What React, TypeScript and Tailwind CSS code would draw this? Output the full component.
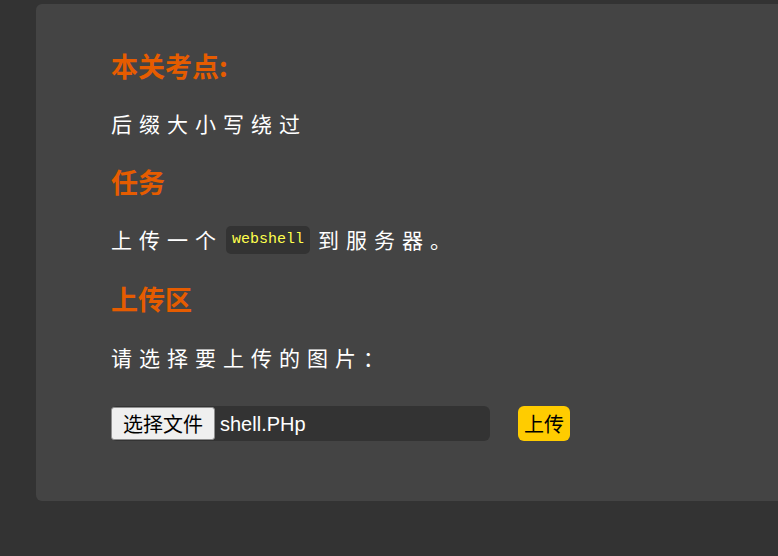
export default function App() {
  const cjk = { fontFamily: '"Noto Sans CJK SC", "Noto Sans", sans-serif' };

  return (
    <div className="w-[778px] h-[556px] overflow-hidden bg-[#333333] pt-[4px] pl-[36px]">
      {/* main card */}
      <div
        className="w-[800px] rounded-[6px] bg-[#444444] pl-[75px] pt-[46px] pb-[60px] flex flex-col"
        style={cjk}
      >
        <h2 className="h-[32px] leading-[32px] text-[27px] font-bold text-[#e65c00]">本关考点:</h2>
        <p className="mt-[25px] h-[32px] leading-[32px] text-[21px] tracking-[7px] text-white">
          后缀大小写绕过
        </p>

        <h2 className="mt-[27px] h-[32px] leading-[32px] text-[27px] font-bold text-[#e65c00]">任务</h2>
        <p className="mt-[26px] h-[32px] flex items-center text-[21px] tracking-[7px] text-white">
          <span>上传一个</span>
          <code
            className="ml-[3px] mr-[8px] h-[28px] px-[6px] rounded-[5px] bg-[#333333] text-[#ffff4d] text-[15px] tracking-normal leading-[28px]"
            style={{ fontFamily: '"Liberation Mono", "DejaVu Sans Mono", monospace' }}
          >
            webshell
          </code>
          <span>到服务器。</span>
        </p>

        <h2 className="mt-[27px] h-[32px] leading-[32px] text-[27px] font-bold text-[#e65c00]">上传区</h2>
        <p className="mt-[26px] h-[32px] leading-[32px] text-[21px] tracking-[7px] text-white">
          请选择要上传的图片：
        </p>

        {/* upload form */}
        <div className="mt-[33px] flex items-center">
          <div className="w-[379px] h-[35px] rounded-[6px] bg-[#333333] flex items-center">
            <span className="h-[33px] w-[104px] flex items-center justify-center rounded-[3px] border border-[#8f8f8f] bg-[#efefef] text-[20px] text-black">
              选择文件
            </span>
            <span
              className="ml-[5px] text-[20px] text-white"
              style={{ fontFamily: '"Liberation Sans", Arial, sans-serif' }}
            >
              shell.PHp
            </span>
          </div>
          <button className="ml-[28px] h-[35px] w-[52px] rounded-[6px] bg-[#ffcc00] text-[20px] text-black flex items-center justify-center">
            上传
          </button>
        </div>
      </div>
    </div>
  );
}
